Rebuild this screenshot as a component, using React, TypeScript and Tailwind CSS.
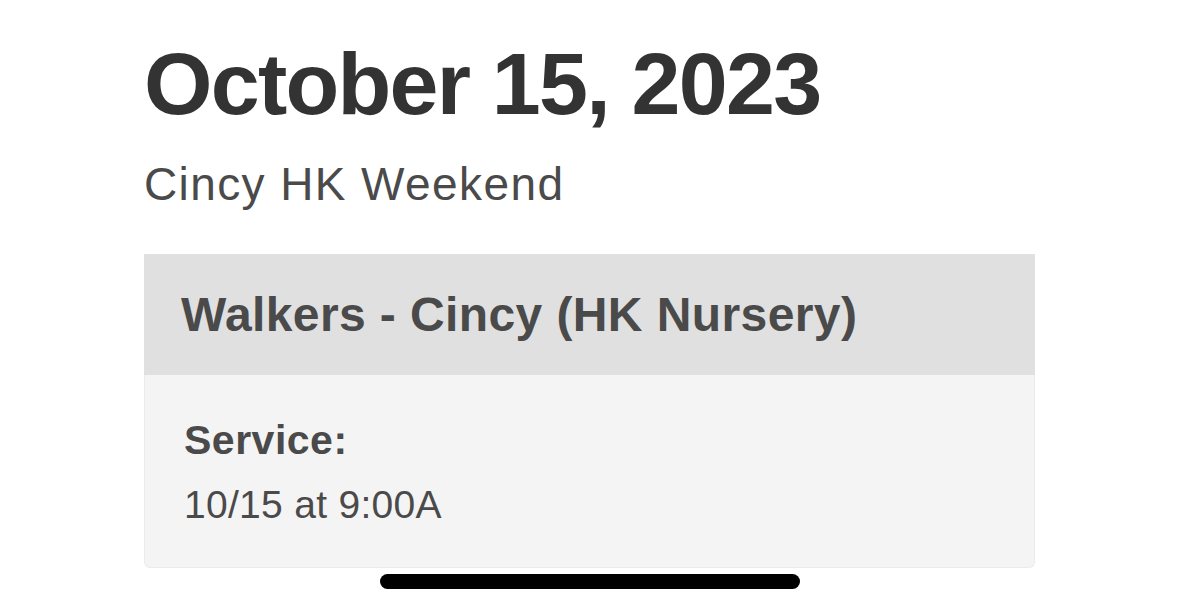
export default function App() {
  return (
    <div className="relative min-h-[613px] w-full bg-white font-['Liberation_Sans',Arial,sans-serif]">
      <div className="mx-auto w-[891px] pt-[40px]">
        {/* Date heading */}
        <h1 className="text-[88px] font-bold leading-none tracking-[-1.75px] text-[#333333]">October 15, 2023</h1>
        <p className="mt-[33px] text-[46px] leading-none tracking-[1.4px] text-[#4a4a4a]">Cincy HK Weekend</p>

        {/* Assignment card */}
        <div className="mt-[47px]">
          <div className="flex h-[121px] items-center bg-[#e0e0e0] px-[37px]">
            <h2 className="text-[48px] font-bold leading-none tracking-[0.4px] text-[#4a4a4a]">Walkers - Cincy (HK Nursery)</h2>
          </div>
          <div className="rounded-b-[6px] border border-t-0 border-[#ebebeb] bg-[#f4f4f4] px-[39px] pt-[45px] pb-[43px]">
            <div className="text-[41px] font-bold leading-none tracking-[0.5px] text-[#4a4a4a]">Service:</div>
            <div className="mt-[24px] text-[39px] leading-none tracking-[0.3px] text-[#4a4a4a]">10/15 at 9:00A</div>
          </div>
        </div>
      </div>

      {/* home indicator */}
      <div className="absolute left-[380px] top-[574px] h-[15px] w-[420px] rounded-full bg-black" />
    </div>
  )
}
